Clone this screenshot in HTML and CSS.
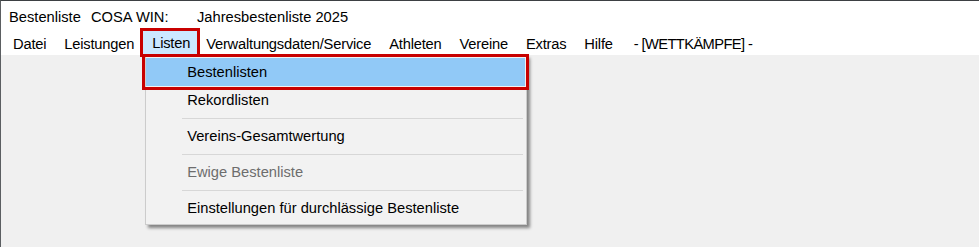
FILE: index.html
```html
<!DOCTYPE html>
<html lang="de">
<head>
    <meta charset="UTF-8">
    <title>Bestenliste COSA WIN</title>
    <link rel="stylesheet" href="styles.css">
</head>
<body>
    <div class="window">
        <div class="titlebar">
            <span class="title-app">Bestenliste</span>
            <span class="title-prog">COSA WIN:</span>
            <span>Jahresbestenliste 2025</span>
        </div>

        <nav class="menubar">
            <div class="menu-item">Datei</div>
            <div class="menu-item">Leistungen</div>
            <div class="menu-item open marked">
                Listen
                <ul class="dropdown">
                    <li class="entry active marked">Bestenlisten</li>
                    <li class="entry">Rekordlisten</li>
                    <li class="separator"></li>
                    <li class="entry">Vereins-Gesamtwertung</li>
                    <li class="separator"></li>
                    <li class="entry disabled">Ewige Bestenliste</li>
                    <li class="separator"></li>
                    <li class="entry">Einstellungen für durchlässige Bestenliste</li>
                </ul>
            </div>
            <div class="menu-item">Verwaltungsdaten/Service</div>
            <div class="menu-item">Athleten</div>
            <div class="menu-item">Vereine</div>
            <div class="menu-item">Extras</div>
            <div class="menu-item">Hilfe</div>
            <span class="menu-status">- [WETTKÄMPFE] -</span>
        </nav>

        <div class="client"></div>
    </div>
</body>
</html>
```

FILE: styles.css
```css
html, body {
    margin: 0;
    height: 100%;
}

body {
    font-family: 'Liberation Sans', Arial, sans-serif;
    font-size: 14.7px;
    color: #000;
    background-color: #f0f0f0;
}

.window {
    height: 100%;
    box-sizing: border-box;
    border-top: 1px solid #3d4043;
    border-left: 1px solid #5b5e61;
    display: flex;
    flex-direction: column;
}

/* caption line */
.titlebar {
    height: 30px;
    background-color: #fff;
    display: flex;
    align-items: center;
    padding-left: 8px;
    padding-top: 2px;
    box-sizing: border-box;
}

.title-app {
    width: 82px;
}

.title-prog {
    width: 106px;
}

/* menu bar */
.menubar {
    height: 24px;
    background-color: #fff;
    display: flex;
    align-items: stretch;
    padding-left: 3px;
    letter-spacing: -0.2px;
}

.menu-item {
    padding: 0 9px;
    display: flex;
    align-items: center;
    line-height: 1;
    padding-top: 2px;
}

.menu-item.open {
    position: relative;
    background-color: #cce8ff;
    height: 23px;
    box-sizing: border-box;
    padding-right: 7px;
}

.menu-status {
    display: flex;
    align-items: center;
    margin-left: 12px;
    padding-top: 2px;
    letter-spacing: -0.6px;
}

/* red annotation frames */
.marked {
    outline: 3px solid #c80000;
    z-index: 2;
}

.client {
    flex: 1;
    background-color: #f0f0f0;
}

/* popup menu */
.dropdown {
    position: absolute;
    top: 24px;
    left: 2px;
    width: 382px;
    box-sizing: border-box;
    margin: 0;
    padding: 2px 1px 2px 0;
    list-style: none;
    background-color: #f2f2f2;
    border: 1px solid #cccccc;
    box-shadow: 3px 3px 3px rgba(0, 0, 0, 0.45);
    z-index: 1;
    letter-spacing: 0;
}

.entry {
    height: 28px;
    line-height: 28px;
    padding-left: 41px;
    white-space: nowrap;
}

.entry.active {
    background-color: #91c9f7;
    position: relative;
    outline-offset: 1px;
}

.entry.disabled {
    color: #6d6d6d;
}

.separator {
    height: 8px;
    display: flex;
    align-items: center;
    padding-left: 36px;
    padding-right: 2px;
}

.separator::after {
    content: "";
    flex: 1;
    border-top: 1px solid #d7d7d7;
}
```
